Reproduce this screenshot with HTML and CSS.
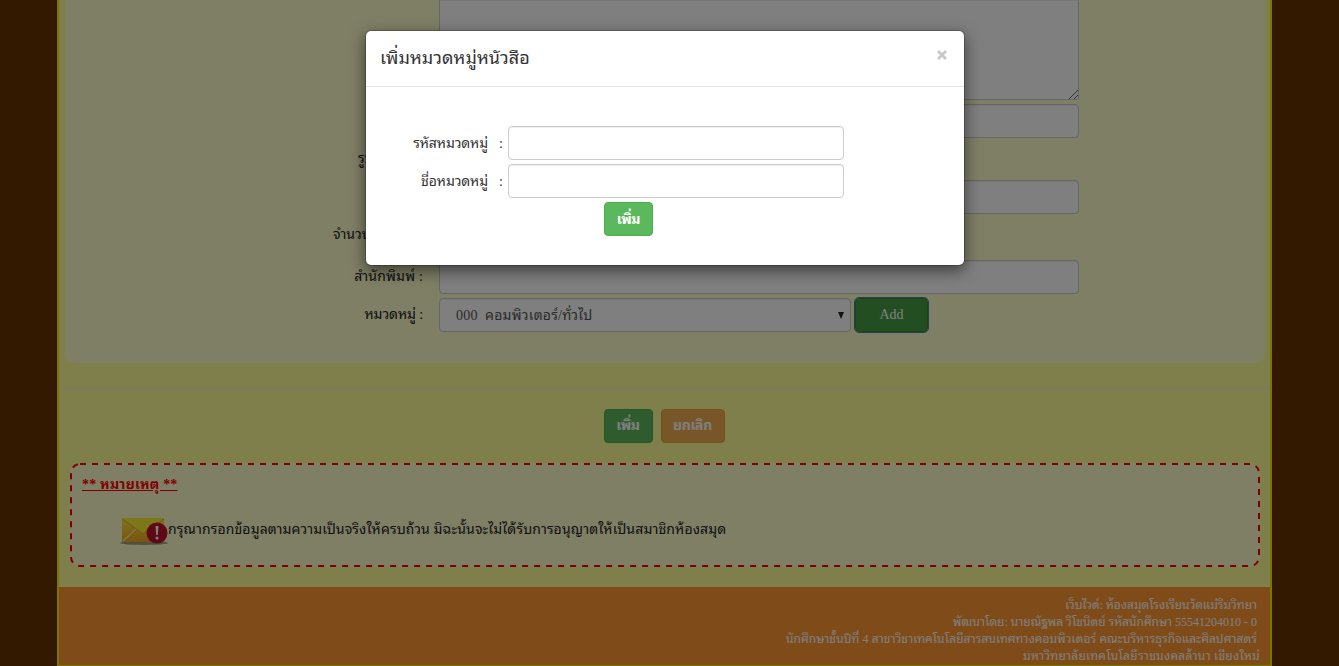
FILE: index.html
```html
<!DOCTYPE html>
<html lang="th">
<head>
<meta charset="utf-8">
<title>ห้องสมุดโรงเรียนวัดแม่ริมวิทยา</title>
<link rel="stylesheet" href="styles.css">
</head>
<body>
<div class="page">
  <main class="content">
    <section class="panel">
      <div class="row row-area"><span></span><div class="control area"><svg class="grip" width="9" height="9" viewBox="0 0 9 9"><path d="M0 9 9 0M5 9 9 5" stroke="#666" fill="none"/></svg></div></div>
      <div class="row"><span></span><div class="control"></div></div>
      <div class="row row-image"><span class="label label-start l-image">รูปหนังสือ :</span></div>
      <div class="row"><span></span><div class="control"></div></div>
      <div class="row row-count"><span class="label label-start l-count">จำนวนหนังสือ :</span></div>
      <div class="row"><span class="label"><span class="t-pub">สำนักพิมพ์ :</span></span><div class="control"></div></div>
      <div class="row"><span class="label"><span class="t-cat">หมวดหมู่ :</span></span>
        <div class="group"><div class="control select"><span class="t-option">000&nbsp; คอมพิวเตอร์/ทั่วไป</span><svg width="6" height="7" viewBox="0 0 6 7"><path d="M0 0H6L3 7Z" fill="#222"/></svg></div><button class="btn add">Add</button></div>
      </div>
    </section>
    <hr class="rule">
    <div class="actions"><button class="btn green">เพิ่ม</button><button class="btn orange">ยกเลิก</button></div>
    <section class="note">
      <svg class="dashes" width="1190" height="104"><rect x="1" y="1" width="1188" height="102" rx="9" fill="none" stroke="#f00" stroke-width="2" stroke-dasharray="6 6"/></svg>
      <strong class="note-title">** หมายเหตุ **</strong>
      <div class="note-line">
        <svg class="mail" width="50" height="32" viewBox="0 0 50 32"><defs><linearGradient id="g" x2="0" y2="1"><stop stop-color="#ffe943"/><stop offset="1" stop-color="#f3a91e"/></linearGradient></defs><ellipse cx="25" cy="28" rx="24" ry="2" fill="#a5a080"/><path d="M3 3H45V27H3Z" fill="url(#g)"/><path d="M3 3 24 18 45 3Z" fill="#f8ef32"/><path d="M3 4 24 19 45 4" fill="none" stroke="#e2b51d"/><path d="M4 26 17 14" stroke="#ffe894" stroke-width="1.500"/><circle cx="38" cy="18" r="10.500" fill="#bd142c"/><path d="M36.500 11h3l-.7 9h-1.600Z" fill="#fff"/><circle cx="38" cy="23" r="1.500" fill="#fff"/></svg>
        <span class="t-note">กรุณากรอกข้อมูลตามความเป็นจริงให้ครบถ้วน มิฉะนั้นจะไม่ได้รับการอนุญาตให้เป็นสมาชิกห้องสมุด</span>
      </div>
    </section>
  </main>
  <footer class="footer">
    <span class="f1">เว็บไวต์: ห้องสมุดโรงเรียนวัดแม่ริมวิทยา</span>
    <span class="f2">พัฒนาโดย: นายณัฐพล วิโชนิตย์ รหัสนักศึกษา 55541204010 - 0</span>
    <span class="f3">นักศึกษาชั้นปีที่ 4 สาขาวิชาเทคโนโลยีสารสนเทศทางคอมพิวเตอร์ คณะบริหารธุรกิจและศิลปศาสตร์</span>
    <span class="f4">มหาวิทยาลัยเทคโนโลยีราชมงคลล้านา เชียงใหม่</span>
  </footer>
</div>
<div class="backdrop">
  <div class="modal">
    <header class="modal-head"><h4 class="modal-title">เพิ่มหมวดหมู่หนัวสือ</h4><svg class="close" width="10" height="10" viewBox="0 0 10 10"><path d="M1 1 9 9M9 1 1 9" stroke="#c8c8c8" stroke-width="2.800"/></svg></header>
    <div class="modal-body">
      <div class="mrow"><span class="m1">รหัสหมวดหมู่</span><span class="colon">:</span><div class="control"></div></div>
      <div class="mrow"><span class="m2">ชื่อหมวดหมู่</span><span class="colon">:</span><div class="control"></div></div>
      <button class="btn green">เพิ่ม</button>
    </div>
  </div>
</div>
</body>
</html>
```
FILE: styles.css
```css
* { box-sizing: border-box; }
body {
  margin: 0;
  height: 666px;
  overflow: hidden;
  background: #630;
  color: #333;
  font: 14px/20px "Liberation Serif", "Noto Sans Thai Looped", "Noto Sans Thai", "Noto Sans", serif;
  white-space: nowrap;
}
.page {
  width: 1215px;
  height: 666px;
  margin-left: 57px;
  border: solid #f8ee00;
  border-width: 0 2px 1px;
  background: #ff9;
  display: flex;
  flex-direction: column;
}
.content { height: 587px; padding: 0 5px 0 6px; }
.panel {
  height: 363px;
  border-radius: 0 0 10px 10px;
  background: #ffc;
}
.row {
  display: grid;
  grid-template-columns: 358px 640px;
  column-gap: 16px;
  height: 34px;
  margin-bottom: 4px;
  align-items: center;
}
.row-area { height: 100px; }
.row-image { height: 42px; margin: -4px 0 0; }
.row-count { height: 46px; margin: -4px 0 0; }
.label { text-align: right; color: #222; }
.label-start { text-align: left; }
.l-image { padding-left: 293px; }
.l-count { padding: 0 0 4px 268px; }
.t-pub { letter-spacing: .2px; }
.t-cat { letter-spacing: -.1px; }
.t-option { letter-spacing: .22px; padding-top: 2px; }
.control {
  height: 34px;
  border: 1px solid #ccc;
  border-radius: 4px;
  background: #fff;
  box-shadow: inset 0 1px 1px rgba(0, 0, 0, .075);
}
.area {
  height: 100px;
  border-top: 0;
  border-radius: 0 0 2px 2px;
  display: flex;
  justify-content: flex-end;
  align-items: flex-end;
}
.group { display: flex; gap: 4px; }
.select {
  width: 412px;
  padding: 0 6px 0 16px;
  display: flex;
  align-items: center;
  justify-content: space-between;
  color: #555;
}
.btn {
  height: 34px;
  padding: 1px 0 0;
  border: 1px solid #4cae4c;
  border-radius: 4px;
  color: #fff;
  font: bold 14px/20px "Liberation Serif", "Noto Sans Thai Looped", "Noto Sans Thai", "Noto Sans", serif;
  letter-spacing: -.4px;
}
.green { width: 49px; background: #5cb85c; }
.orange { width: 64px; background: #f0ad4e; border-color: #eea236; }
.add {
  width: 73px;
  padding: 0;
  background: #449d44;
  border-color: #398439;
  outline: 1px solid #4b80a8;
  font-weight: normal;
  letter-spacing: 0;
}
.rule { height: 1px; margin: 25px -5px 20px -6px; border: 0; background: #eee; }
.actions { display: flex; justify-content: center; gap: 8px; padding-right: 2px; }
.actions .btn { padding: 0; }
.note {
  position: relative;
  height: 104px;
  margin: 20px 5px 0;
  border-radius: 10px;
  padding: 12px;
  background: #ffc;
}
.dashes { position: absolute; inset: 0; }
.note-title {
  display: inline-block;
  color: #f00;
  text-decoration: underline;
  letter-spacing: .2px;
}
.note-line { display: flex; align-items: center; margin: 20px 0 0 37px; }
.t-note { color: #222; margin: 0 0 2px -1px; letter-spacing: .12px; }
.footer {
  height: 78px;
  padding: 10px 13px 0 0;
  background: #ff9933;
  color: #fff;
  display: flex;
  flex-direction: column;
  align-items: flex-end;
  font-size: 12px;
  line-height: 17px;
}
.f1 { letter-spacing: -.03px; }
.f2 { letter-spacing: 0; }
.f3 { letter-spacing: .08px; }
.f4 { margin-right: -3px; letter-spacing: .26px; }
.backdrop {
  position: absolute;
  inset: 0;
  background: rgba(0, 0, 0, .5);
}
.modal {
  width: 600px;
  height: 236px;
  margin: 30px 0 0 365px;
  border: 1px solid rgba(0, 0, 0, .2);
  border-radius: 6px;
  background: #fff;
  background-clip: padding-box;
  box-shadow: 0 5px 15px rgba(0, 0, 0, .5);
}
.modal-head {
  height: 56px;
  padding: 0 17px 0 14px;
  border-bottom: 1px solid #e5e5e5;
  display: flex;
  justify-content: space-between;
  align-items: center;
}
.modal-title { margin: 0 0 2px; font-size: 18px; font-weight: normal; letter-spacing: .04px; }
.close { margin-bottom: 7px; }
.modal-body { padding-top: 39px; display: flex; flex-direction: column; gap: 4px; }
.mrow {
  display: grid;
  grid-template-columns: 122px 15px 336px;
  align-items: center;
  justify-items: end;
}
.m1, .m2 { padding-top: 2px; letter-spacing: -.12px; }
.colon { padding-top: 1px; }
.mrow .control { width: 336px; margin-left: 5px; justify-self: start; }
.modal-body .btn { margin-left: 238px; }
```
